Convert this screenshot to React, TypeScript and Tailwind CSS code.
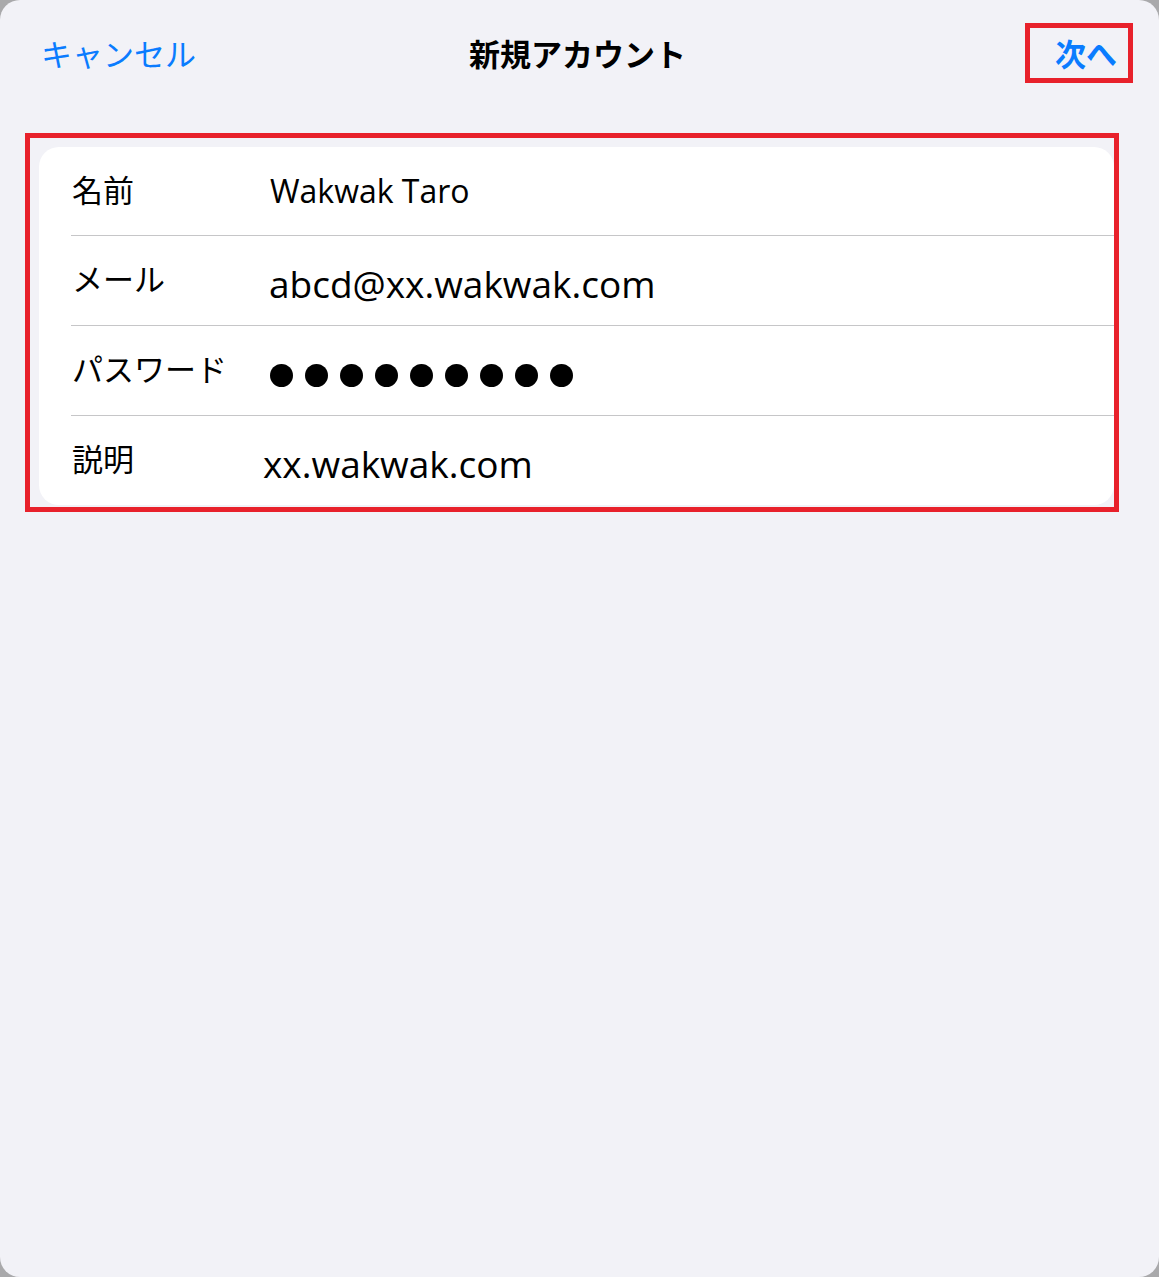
const jp = { fontFamily: '"Noto Sans CJK JP", "Noto Sans", sans-serif' };
const latin = { fontFamily: '"Open Sans", "Noto Sans CJK JP", sans-serif' };

function Divider() {
  return <div className="ml-[32px] h-px bg-[#c6c6c8]" />;
}

function Row({ label, first, children }: { label: string; first?: boolean; children: React.ReactNode }) {
  return (
    <div className={`flex items-center pl-[33px] ${first ? "h-[88px]" : "h-[89px]"}`}>
      <div style={jp} className="w-[198px] shrink-0 pb-[6px] text-[31px] leading-none text-black">
        {label}
      </div>
      <div className="flex-1">{children}</div>
    </div>
  );
}

export default function App() {
  return (
    <div className="h-[1277px] w-[1159px] bg-[#a9a9ab]">
      <div className="h-full w-full overflow-hidden rounded-[20px] bg-[#f2f2f7]">
        {/* ナビゲーションバー */}
        <div className="grid grid-cols-[1fr_auto_1fr] items-center pt-[23px]">
          <button
            type="button"
            style={jp}
            className="justify-self-start pb-[2px] pl-[41px] text-[31px] leading-none text-[#0a7cff]"
          >
            キャンセル
          </button>
          <h1 style={jp} className="-ml-[4px] pb-[2px] text-[31px] font-bold leading-none text-black">
            新規アカウント
          </h1>
          <div className="justify-self-end pr-[26px]">
            <div className="flex h-[60px] w-[108px] items-center border-[5px] border-[#e8212b] pb-[2px] pl-[25px]">
              <span style={jp} className="text-[31px] font-bold leading-none text-[#0a7cff]">
                次へ
              </span>
            </div>
          </div>
        </div>

        {/* 入力フォーム */}
        <div className="ml-[25px] mt-[50px] w-[1094px] border-[5px] border-[#e8212b] pb-[2px] pl-[9px] pt-[9px]">
          <div className="overflow-hidden rounded-[20px] bg-white">
            <Row label="名前" first>
              <div style={latin} className="text-[32px] leading-none text-black">
                Wakwak Taro
              </div>
            </Row>
            <Divider />
            <Row label="メール">
              <div style={latin} className="-ml-[1px] pt-[5px] text-[37px] leading-none text-black">
                abcd@xx.wakwak.com
              </div>
            </Row>
            <Divider />
            <Row label="パスワード">
              <div className="flex gap-[12px] pt-[10px]">
                {Array.from({ length: 9 }).map((_, i) => (
                  <span key={i} className="h-[23px] w-[23px] rounded-full bg-black" />
                ))}
              </div>
            </Row>
            <Divider />
            <Row label="説明">
              <div style={latin} className="-ml-[7px] pt-[5px] text-[37px] leading-none text-black">
                xx.wakwak.com
              </div>
            </Row>
          </div>
        </div>
      </div>
    </div>
  );
}
